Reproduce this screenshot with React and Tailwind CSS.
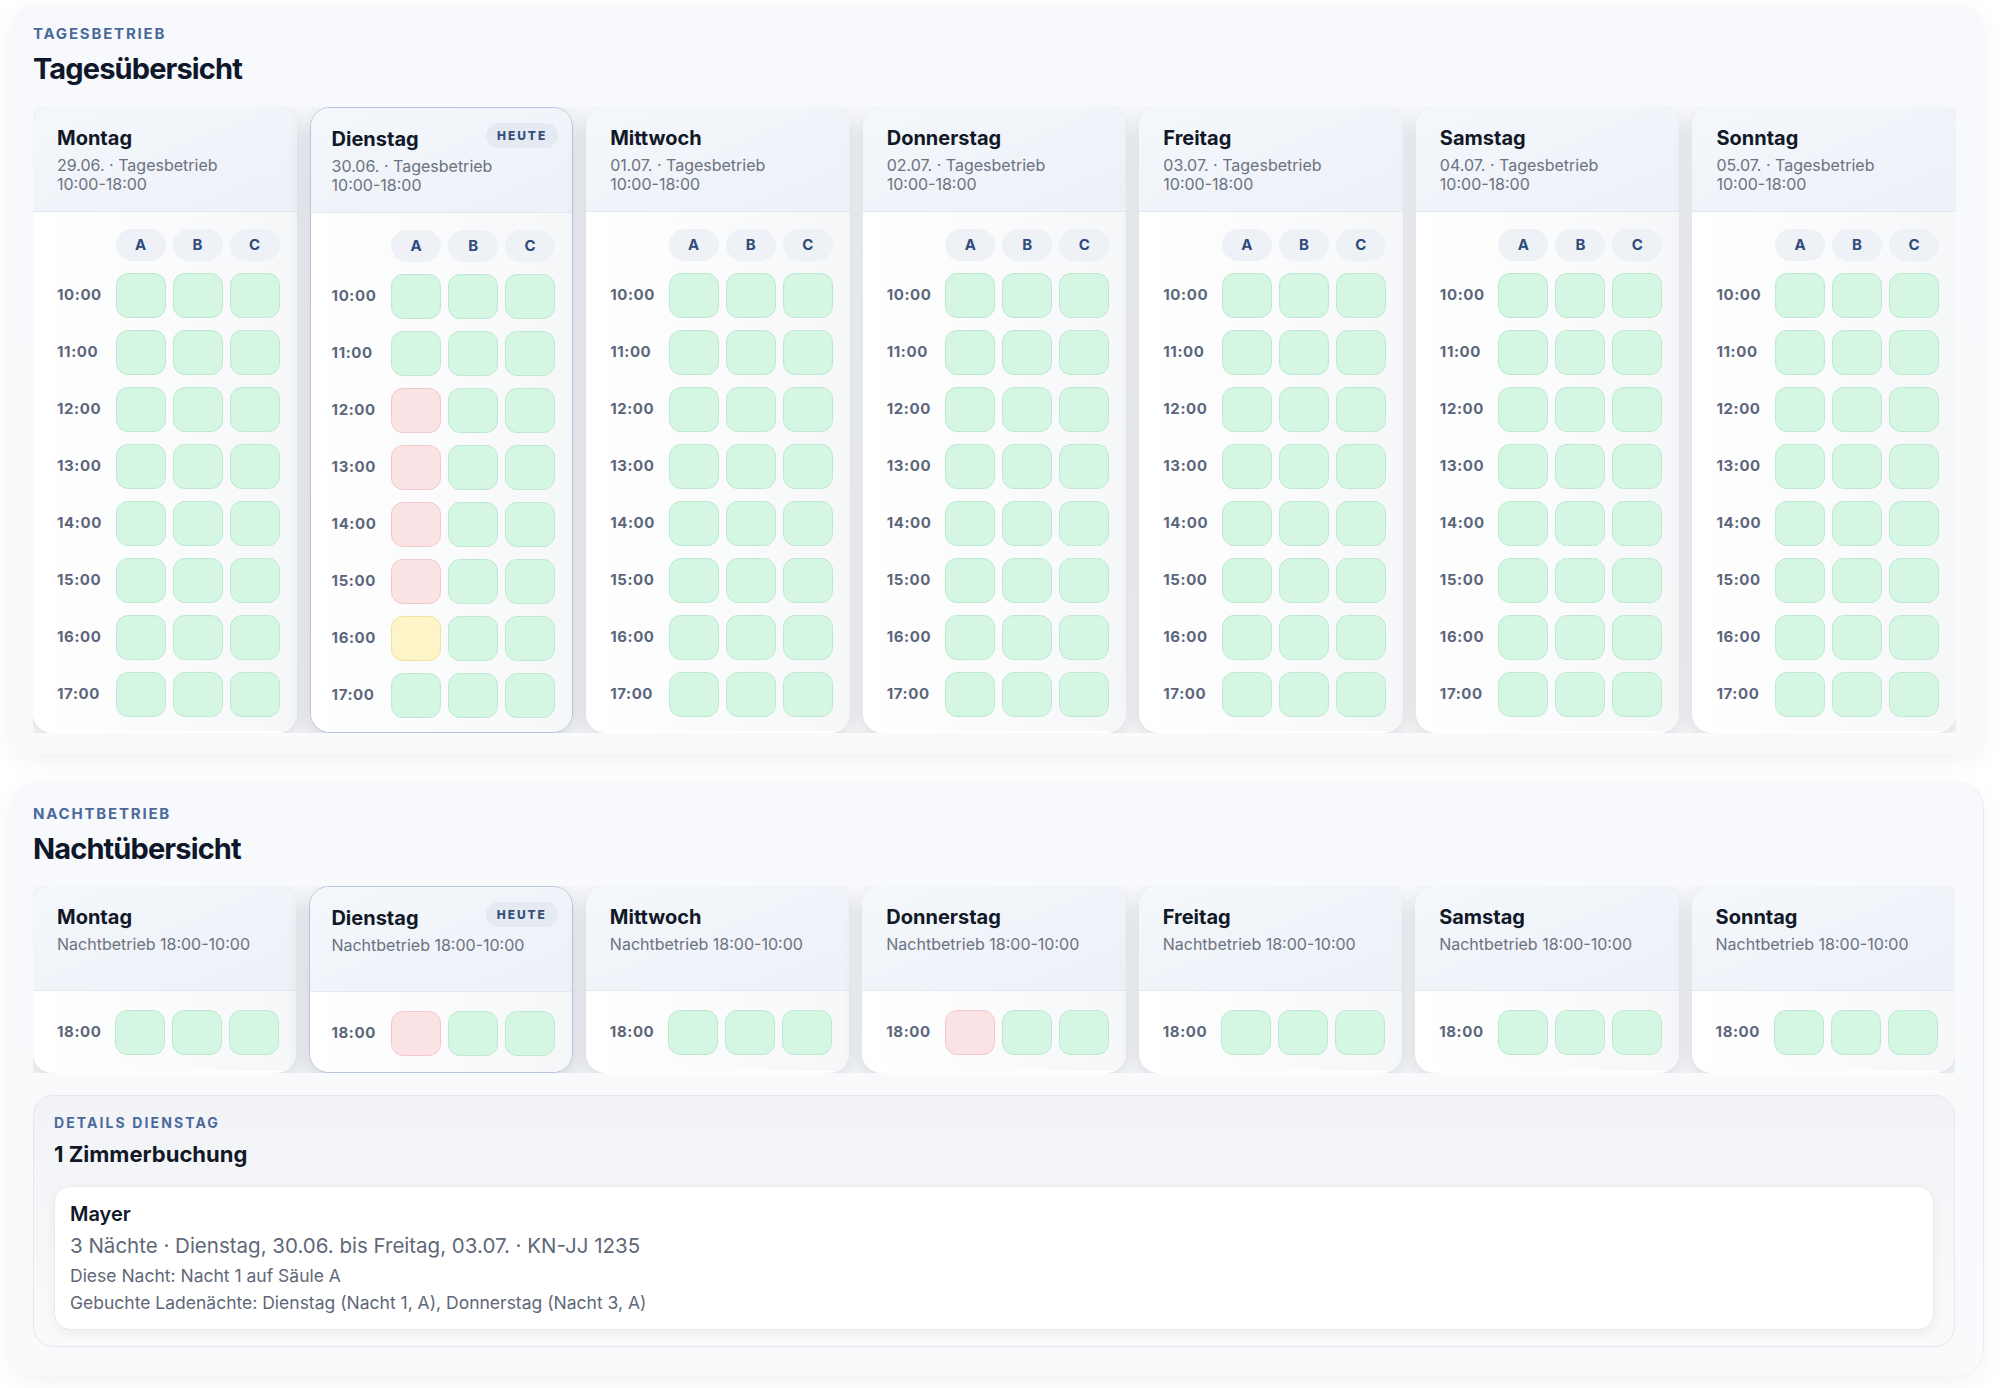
import React from 'react';

const days = [
    { name: 'Montag', date: '29.06.' },
    { name: 'Dienstag', date: '30.06.', today: true },
    { name: 'Mittwoch', date: '01.07.' },
    { name: 'Donnerstag', date: '02.07.' },
    { name: 'Freitag', date: '03.07.' },
    { name: 'Samstag', date: '04.07.' },
    { name: 'Sonntag', date: '05.07.' },
];

const dayHours = ['10:00', '11:00', '12:00', '13:00', '14:00', '15:00', '16:00', '17:00'];

// belegte Slots pro Tag: { 'Tag|Stunde|Säule': status }
const dayBookings = {
    'Dienstag|12:00|A': 'red',
    'Dienstag|13:00|A': 'red',
    'Dienstag|14:00|A': 'red',
    'Dienstag|15:00|A': 'red',
    'Dienstag|16:00|A': 'yellow',
};

const nightBookings = {
    'Dienstag|18:00|A': 'red',
    'Donnerstag|18:00|A': 'red',
};

const cellStyles = {
    green: 'bg-[#d5f6e3] border-[#bde9d1]',
    red: 'bg-[#fbe2e4] border-[#f1c8cd]',
    yellow: 'bg-[#fdf4c8] border-[#f1e2a3]',
};

function Cell({ status }) {
    return <div className={`h-[45px] rounded-[12px] border ${cellStyles[status]}`} />;
}

function DayCard({ day, hours, bookings, night }) {
    return (
        <div
            className={`relative rounded-[20px] overflow-hidden bg-white ${
                day.today
                    ? 'border border-[#b8c4d9] shadow-[0_8px_24px_rgba(30,41,59,0.2)]'
                    : 'shadow-[0_6px_20px_rgba(15,23,42,0.15)]'
            }`}
        >
            <div
                className={`h-[105px] border-b border-[#e3e8ef] bg-gradient-to-br from-[#f4f7fb] to-[#edf1f8] pt-[17px] pr-4 ${
                    day.today ? 'pl-[21px]' : 'pl-6'
                }`}
            >
                <div className="text-[20px] leading-[28px] font-bold text-[#111827]">{day.name}</div>
                {night ? (
                    <div className="mt-[4px] text-[16px] leading-[19px] text-[#6b7280]">Nachtbetrieb 18:00-10:00</div>
                ) : (
                    <div className="mt-[4px] text-[16px] leading-[19px] text-[#6b7280]">
                        <div>{day.date} · Tagesbetrieb</div>
                        <div>10:00-18:00</div>
                    </div>
                )}
                {day.today && (
                    <span className="absolute top-[15px] right-[14px] h-[25px] px-[11px] flex items-center rounded-full bg-[#e4e9f2] text-[12px] font-extrabold tracking-[0.16em] text-[#34507e]">
                        HEUTE
                    </span>
                )}
            </div>
            <div
                className={`grid grid-cols-[1fr_50px_50px_50px] gap-x-[7px] gap-y-[12px] items-center bg-gradient-to-r from-white to-[#f6f7f9] pr-[17px] ${
                    day.today ? 'pl-[21px]' : 'pl-6'
                } ${night ? 'pt-[19px] pb-[16px]' : 'pt-[17px] pb-[14px]'}`}
            >
                {!night && (
                    <>
                        <div />
                        {['A', 'B', 'C'].map((c) => (
                            <div
                                key={c}
                                className="h-[32px] rounded-full bg-[#eef1f6] flex items-center justify-center text-[15px] font-bold text-[#2f4b7a]"
                            >
                                {c}
                            </div>
                        ))}
                    </>
                )}
                {hours.map((h) => (
                    <React.Fragment key={h}>
                        <div className="text-[15px] font-bold tracking-[0.04em] text-[#5c667a]">{h}</div>
                        {['A', 'B', 'C'].map((c) => (
                            <Cell key={c} status={bookings[`${day.name}|${h}|${c}`] || 'green'} />
                        ))}
                    </React.Fragment>
                ))}
            </div>
        </div>
    );
}

function Eyebrow({ children, className = '' }) {
    return (
        <div className={`text-[15px] leading-[20px] font-bold tracking-[0.12em] text-[#4a6a9b] ${className}`}>
            {children}
        </div>
    );
}

export default function App() {
    return (
        <div className="min-h-screen bg-white font-['Inter',sans-serif] pt-[4px] pb-[14px]">
            <section className="ml-[10px] mr-[20px] rounded-[26px] bg-gradient-to-b from-[#f7f9fc] to-[#f9fafb] shadow-[0_8px_26px_rgba(15,23,42,0.05)] pl-[23px] pr-[28px] pt-[20px] pb-[21px]">
                <Eyebrow>TAGESBETRIEB</Eyebrow>
                <h1 className="mt-[7px] text-[29px] leading-[36px] font-bold tracking-[-0.03em] text-[#0f172a]">
                    Tagesübersicht
                </h1>
                <div className="mt-5 grid grid-cols-7 gap-[13px] overflow-hidden">
                    {days.map((d) => (
                        <DayCard key={d.name} day={d} hours={dayHours} bookings={dayBookings} />
                    ))}
                </div>
            </section>

            <section className="mt-[28px] ml-[10px] mr-[20px] rounded-[26px] border-r border-[#eaecef] bg-gradient-to-b from-[#f7f9fc] to-[#f9fafb] shadow-[0_8px_26px_rgba(15,23,42,0.05)] pl-[23px] pr-[28px] pt-[22px] pb-[28px]">
                <Eyebrow>NACHTBETRIEB</Eyebrow>
                <h2 className="mt-[7px] text-[29px] leading-[36px] font-bold tracking-[-0.03em] text-[#0f172a]">
                    Nachtübersicht
                </h2>
                <div className="mt-[19px] grid grid-cols-7 gap-[13px] overflow-hidden">
                    {days.map((d) => (
                        <DayCard key={d.name} day={d} hours={['18:00']} bookings={nightBookings} night />
                    ))}
                </div>

                <div className="mt-[22px] rounded-[20px] border border-[#e6e8ec] bg-gradient-to-b from-[#f2f3f6] to-[#f9fafb] px-[20px] pt-[17px] pb-[16px]">
                    <div className="text-[14px] leading-[20px] font-bold tracking-[0.15em] text-[#4a6a9b]">
                        DETAILS DIENSTAG
                    </div>
                    <h3 className="mt-[7px] text-[22px] leading-[28px] font-bold text-[#111827]">
                        1 Zimmerbuchung
                    </h3>
                    <div className="mt-[18px] rounded-[16px] border border-[#e8eaee] bg-white shadow-[0_4px_12px_rgba(15,23,42,0.05)] pl-[15px] pr-4 pt-[13px] pb-[14px]">
                        <div className="text-[20px] leading-[28px] font-semibold text-[#111827]">Mayer</div>
                        <div className="mt-[4px] text-[20.5px] leading-[28px] text-[#5f6878]">
                            3 Nächte · Dienstag, 30.06. bis Freitag, 03.07. · KN-JJ 1235
                        </div>
                        <div className="mt-[3px] text-[17.5px] leading-[25px] text-[#5f6878]">
                            Diese Nacht: Nacht 1 auf Säule A
                        </div>
                        <div className="mt-[2px] text-[17.5px] leading-[25px] text-[#5f6878]">
                            Gebuchte Ladenächte: Dienstag (Nacht 1, A), Donnerstag (Nacht 3, A)
                        </div>
                    </div>
                </div>
            </section>
        </div>
    );
}
